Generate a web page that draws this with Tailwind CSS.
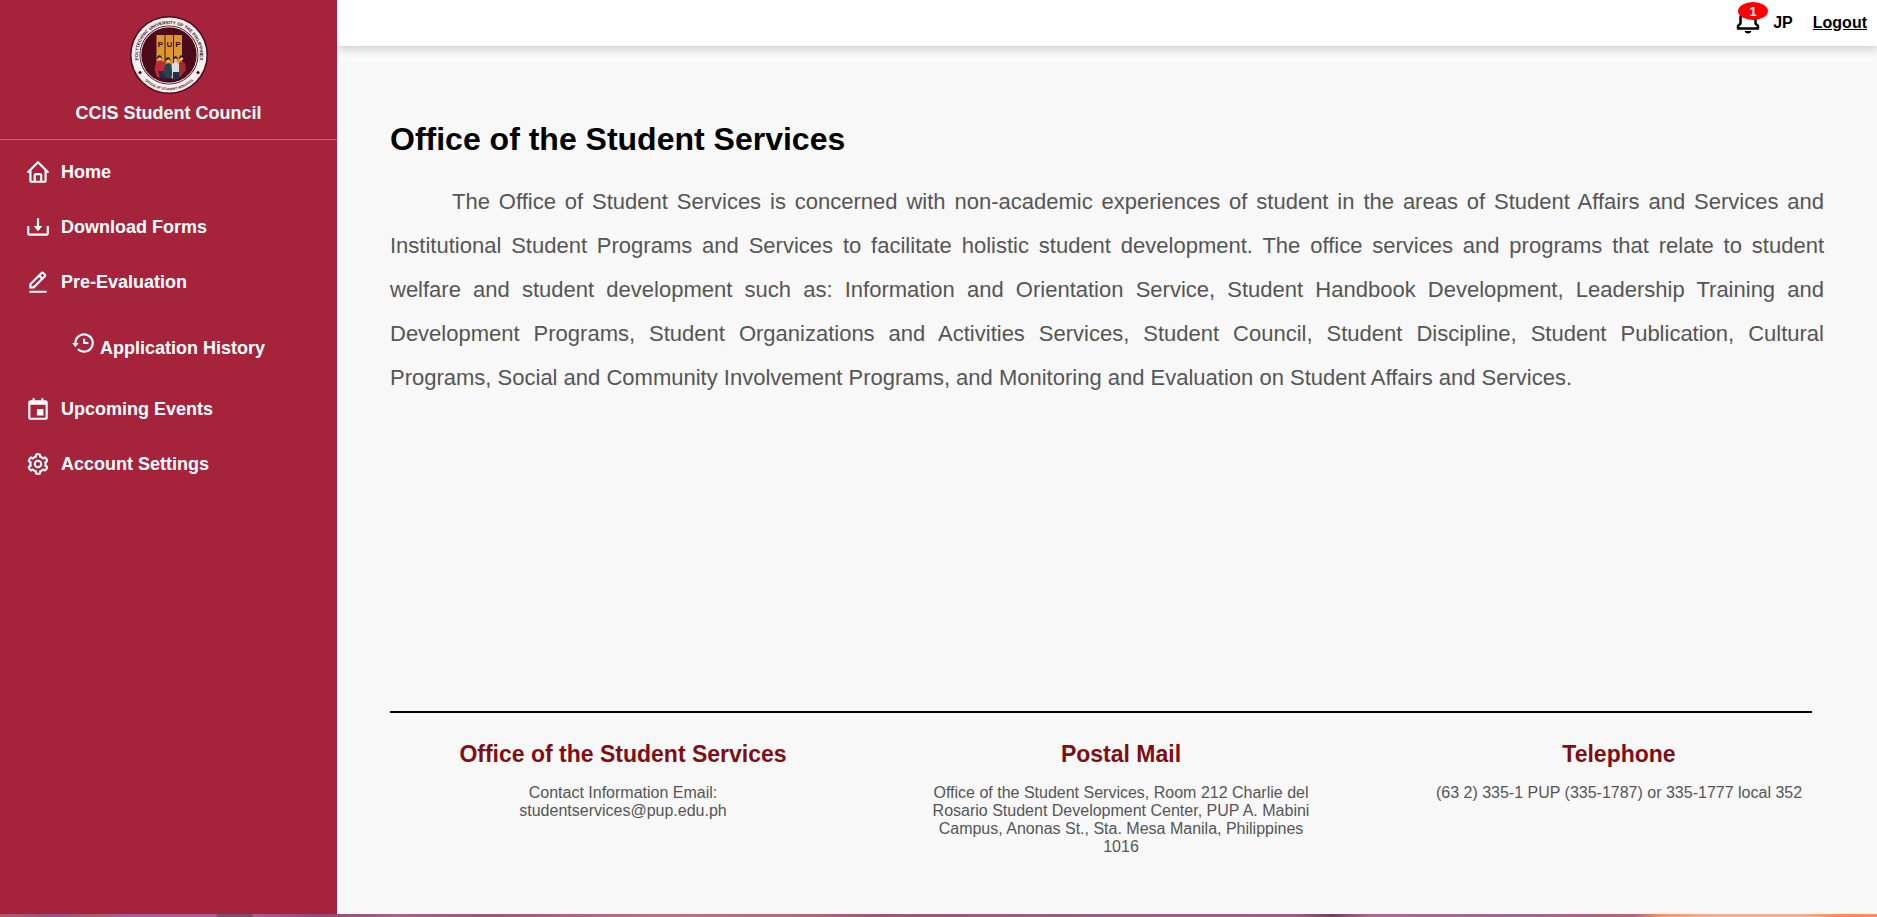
<!DOCTYPE html>
<html lang="en">
<head>
<meta charset="utf-8">
<meta name="viewport" content="width=device-width, initial-scale=1">
<title>Office of the Student Services</title>
<script src="https://cdn.jsdelivr.net/npm/@tailwindcss/browser@4"></script>
</head>
<body class="flex min-h-screen flex-col bg-[#f8f8f8] font-['Liberation_Sans',Arial,sans-serif] text-black">
<div class="flex flex-1">
  <aside class="relative z-10 flex w-[337px] shrink-0 flex-col bg-[#a6243b] text-lg font-bold text-white">
    <div class="flex flex-col items-center border-b border-white/30 pt-4 pb-3">
      <svg class="size-[78px]" viewBox="0 0 78 78" role="img" aria-label="University seal">
        <circle cx="39" cy="39" r="39" fill="#4d0a1b"/>
        <circle cx="39" cy="39" r="37.5" fill="#f6f1f0"/>
        <circle cx="39" cy="39" r="29.5" fill="#4d0a1b"/>
        <circle cx="39" cy="39" r="28.2" fill="none" stroke="#f6f1f0" stroke-width="1"/>
        <g fill="#dd982c"><path d="M26.500 19h8v40l-8-5z"/><path d="M35.500 19h7.500v43h-7.500z"/><path d="M44 19h8v35l-8 5z"/></g>
        <g font-size="8" font-weight="700" fill="#3c0a12" text-anchor="middle"><text x="30.500" y="31">P</text><text x="39.300" y="31">U</text><text x="48" y="31">P</text></g>
        <path d="M24.500 54l1.500-8 4-2 4 2 1 9v6h-8z" fill="#c32835"/>
        <path d="M34 52l2-4 3-1 3 2 1 8-2 5h-6z" fill="#27434b"/>
        <path d="M41.500 49l3-3h3l2 4v11l-3 2h-4z" fill="#d8dde0"/>
        <path d="M49 47l3-2 3 2 1 7-6 7h-1z" fill="#a52a32"/>
        <path d="M28 55h6l2 9-6-3zM43 56h6v6l-6 3z" fill="#173252"/>
        <g fill="#edbd98"><circle cx="29.500" cy="42.500" r="1.900"/><circle cx="38" cy="44.500" r="1.800"/><circle cx="45.500" cy="43.500" r="1.900"/><circle cx="51.500" cy="42.500" r="1.800"/></g>
        <g fill="#1b1420"><path d="M27 43c0-5 5-5 5 0l-2-2zM35.500 45c0-5 5-5 5 0l-2-2zM43 44c0-5 5-5 5 0l-2-2zM49 43c0-5 5-5 5 0l-2-2z"/></g>
        <path id="sealTop" d="M11.600 53.500A31 31 0 1 1 66.400 53.500" fill="none"/>
        <path id="sealBottom" d="M10.500 59.500A35 35 0 0 0 67.500 59.500" fill="none"/>
        <text font-size="4.500" font-weight="700" fill="#4d0a1b" text-anchor="middle"><textPath href="#sealTop" startOffset="50%">POLYTECHNIC UNIVERSITY OF THE PHILIPPINES</textPath></text>
        <text font-size="3.400" font-weight="700" fill="#4d0a1b" text-anchor="middle"><textPath href="#sealBottom" startOffset="50%">OFFICE OF STUDENT SERVICES</textPath></text>
        <circle cx="10" cy="56.500" r="1.600" fill="#4d0a1b"/><circle cx="68" cy="56.500" r="1.600" fill="#4d0a1b"/>
      </svg>
      <p class="mt-[5px] leading-7">CCIS Student Council</p>
    </div>
    <nav class="flex flex-col pt-1">
      <a href="#" class="flex h-[55px] items-center gap-[10px] pl-[25px]">
        <svg class="size-[26px]" viewBox="0 0 24 24" fill="currentColor"><path d="M3 13h1v7c0 1.103.897 2 2 2h12c1.103 0 2-.897 2-2v-7h1a1 1 0 0 0 .707-1.707l-9-9a.999.999 0 0 0-1.414 0l-9 9A1 1 0 0 0 3 13zm7 7v-5h4v5h-4zm2-15.586 6 6V15l.001 5H16v-5c0-1.103-.897-2-2-2h-4c-1.103 0-2 .897-2 2v5H6v-9.586l6-6z"/></svg>
        Home</a>
      <a href="#" class="flex h-[55px] items-center gap-[10px] pl-[25px]">
        <svg class="size-[26px]" viewBox="0 0 24 24" fill="currentColor"><path d="m12 16 4-5h-3V4h-2v7H8z"/><path d="M20 18H4v-7H2v7c0 1.103.897 2 2 2h16c1.103 0 2-.897 2-2v-7h-2v7z"/></svg>
        Download Forms</a>
      <a href="#" class="flex h-[55px] items-center gap-[10px] pl-[25px]">
        <svg class="size-[26px]" viewBox="0 0 24 24" fill="currentColor"><path d="M19.045 7.401c.378-.378.586-.88.586-1.414s-.208-1.036-.586-1.414l-1.586-1.586c-.378-.378-.88-.586-1.414-.586s-1.036.208-1.413.585L4 13.585V18h4.413L19.045 7.401zm-3-3 1.587 1.585-1.590 1.584-1.586-1.585 1.589-1.584zM6 16v-1.585l7.040-7.018 1.586 1.586L7.587 16H6zm-2 4h16v2H4z"/></svg>
        Pre-Evaluation</a>
      <a href="#" class="flex h-[72px] items-start gap-1 pt-[21px] pl-[70px]">
        <svg class="size-[26px]" viewBox="0 0 24 24" fill="currentColor"><path d="M12 8v5h5v-2h-3V8z"/><path d="M21.292 8.497a8.957 8.957 0 0 0-1.928-2.862 9.004 9.004 0 0 0-4.550-2.452 9.090 9.090 0 0 0-3.626 0 8.965 8.965 0 0 0-4.552 2.453 9.048 9.048 0 0 0-1.928 2.860A8.963 8.963 0 0 0 4 12l.001.025H2L5 16l3-3.975H6.001L6 12a6.957 6.957 0 0 1 1.195-3.913 7.066 7.066 0 0 1 1.891-1.892 7.034 7.034 0 0 1 2.503-1.054 7.003 7.003 0 0 1 8.269 5.445 7.117 7.117 0 0 1 0 2.824 6.936 6.936 0 0 1-1.054 2.503c-.25.371-.537.72-.854 1.036a7.058 7.058 0 0 1-2.225 1.501 6.980 6.980 0 0 1-1.313.408 7.117 7.117 0 0 1-2.823 0 6.957 6.957 0 0 1-2.501-1.053 7.066 7.066 0 0 1-1.037-.855l-1.414 1.414A8.985 8.985 0 0 0 13 21a9.050 9.050 0 0 0 3.503-.707 9.009 9.009 0 0 0 3.959-3.260A8.968 8.968 0 0 0 22 12a8.928 8.928 0 0 0-.708-3.503z"/></svg>
        <span class="pt-1">Application History</span></a>
      <a href="#" class="flex h-[55px] items-center gap-[10px] pl-[25px]">
        <svg class="size-[26px]" viewBox="0 0 24 24" fill="currentColor"><path d="M19 4h-2V2h-2v2H9V2H7v2H5c-1.103 0-2 .897-2 2v14c0 1.103.897 2 2 2h14c1.103 0 2-.897 2-2V6c0-1.103-.897-2-2-2zm.002 16H5V8h14l.002 12z"/><path d="M11 12h6v6h-6z"/></svg>
        Upcoming Events</a>
      <a href="#" class="flex h-[55px] items-center gap-[10px] pl-[25px]">
        <svg class="size-[26px]" viewBox="0 0 24 24" fill="currentColor"><path d="M12 16c2.206 0 4-1.794 4-4s-1.794-4-4-4-4 1.794-4 4 1.794 4 4 4zm0-6c1.084 0 2 .916 2 2s-.916 2-2 2-2-.916-2-2 .916-2 2-2z"/><path d="m2.845 16.136 1 1.730c.531.917 1.809 1.261 2.730.73l.529-.306A8.100 8.100 0 0 0 9 19.402V20c0 1.103.897 2 2 2h2c1.103 0 2-.897 2-2v-.598a8.132 8.132 0 0 0 1.896-1.111l.529.306c.923.53 2.198.188 2.731-.731l.999-1.729a2.001 2.001 0 0 0-.731-2.732l-.505-.292a7.718 7.718 0 0 0 0-2.224l.505-.292a2.002 2.002 0 0 0 .731-2.732l-.999-1.729c-.531-.92-1.808-1.265-2.731-.732l-.529.306A8.100 8.100 0 0 0 15 4.598V4c0-1.103-.897-2-2-2h-2c-1.103 0-2 .897-2 2v.598a8.132 8.132 0 0 0-1.896 1.111l-.529-.306c-.924-.531-2.200-.187-2.731.732l-.999 1.729a2.001 2.001 0 0 0 .731 2.732l.505.292a7.683 7.683 0 0 0 0 2.223l-.505.292a2.003 2.003 0 0 0-.731 2.733zm3.326-2.758A5.703 5.703 0 0 1 6 12c0-.462.058-.926.17-1.378a.999.999 0 0 0-.47-1.108l-1.123-.65.998-1.729 1.145.662a.997.997 0 0 0 1.188-.142 6.071 6.071 0 0 1 2.384-1.399A1 1 0 0 0 11 5.300V4h2v1.300a1 1 0 0 0 .708.956 6.083 6.083 0 0 1 2.384 1.399.999.999 0 0 0 1.188.142l1.144-.661 1 1.729-1.124.649a1 1 0 0 0-.47 1.108c.112.452.17.916.17 1.378 0 .461-.058.925-.171 1.378a1 1 0 0 0 .471 1.108l1.123.649-.998 1.729-1.145-.661a.996.996 0 0 0-1.188.142 6.071 6.071 0 0 1-2.384 1.399A1 1 0 0 0 13 18.700l.002 1.300H11v-1.300a1 1 0 0 0-.708-.956 6.083 6.083 0 0 1-2.384-1.399.992.992 0 0 0-1.188-.141l-1.144.662-1-1.729 1.124-.651a1 1 0 0 0 .471-1.108z"/></svg>
        Account Settings</a>
    </nav>
  </aside>

  <div class="flex min-w-0 flex-1 flex-col">
    <header class="flex h-[46px] items-start justify-end bg-white pr-[10px] font-bold shadow-[0_2px_10px_rgba(0,0,0,0.2)]">
      <button type="button" class="relative mt-[6px] mr-[10px]" aria-label="Notifications">
        <svg class="size-[30px]" viewBox="0 0 24 24" fill="currentColor"><path d="M19 13.586V10c0-3.217-2.185-5.927-5.145-6.742C13.562 2.520 12.846 2 12 2s-1.562.52-1.855 1.258C7.185 4.074 5 6.783 5 10v3.586l-1.707 1.707A.996.996 0 0 0 3 16v2a1 1 0 0 0 1 1h16a1 1 0 0 0 1-1v-2a.996.996 0 0 0-.293-.707L19 13.586zM19 17H5v-.586l1.707-1.707A.996.996 0 0 0 7 14v-4c0-2.757 2.243-5 5-5s5 2.243 5 5v4c0 .266.105.52.293.707L19 16.414V17zm-7 5a2.980 2.980 0 0 0 2.818-2H9.182A2.980 2.980 0 0 0 12 22z"/></svg>
        <span class="absolute -top-1 left-[5px] flex h-[18px] w-[30px] items-center justify-center rounded-[50%] bg-[#ff0000] text-[13px] leading-none text-white">1</span>
      </button>
      <span class="mt-[11px] mr-5">JP</span>
      <a href="#" class="mt-[11px] underline">Logout</a>
    </header>

    <main class="pt-[73px] pr-[53px] pl-[53px]">
      <h1 class="text-[32px] leading-10 font-bold">Office of the Student Services</h1>
      <p class="mt-[21px] indent-[62px] text-[22px] leading-[44px] text-justify text-[#555555]">The Office of Student Services is concerned with non-academic experiences of student in the areas of Student Affairs and Services and Institutional Student Programs and Services to facilitate holistic student development. The office services and programs that relate to student welfare and student development such as: Information and Orientation Service, Student Handbook Development, Leadership Training and Development Programs, Student Organizations and Activities Services, Student Council, Student Discipline, Student Publication, Cultural Programs, Social and Community Involvement Programs, and Monitoring and Evaluation on Student Affairs and Services.</p>
    </main>

    <footer class="mt-auto pb-[58px]">
      <hr class="mr-[65px] ml-[53px] border-t-2 border-black">
      <div class="mt-[27px] mr-[9px] ml-[37px] grid grid-cols-3 text-center leading-[18px] text-[#555555]">
        <section class="flex flex-col items-center">
          <h2 class="text-[23px] leading-7 font-bold text-[#800d12]">Office of the Student Services</h2>
          <p class="mt-4 max-w-96">Contact Information Email:<br>studentservices@pup.edu.ph</p>
        </section>
        <section class="flex flex-col items-center">
          <h2 class="text-[23px] leading-7 font-bold text-[#800d12]">Postal Mail</h2>
          <p class="mt-4 max-w-96">Office of the Student Services, Room 212 Charlie del Rosario Student Development Center, PUP A. Mabini Campus, Anonas St., Sta. Mesa Manila, Philippines 1016</p>
        </section>
        <section class="flex flex-col items-center">
          <h2 class="text-[23px] leading-7 font-bold text-[#800d12]">Telephone</h2>
          <p class="mt-4 max-w-96">(63 2) 335-1 PUP (335-1787) or 335-1777 local 352</p>
        </section>
      </div>
    </footer>
  </div>
</div>
<div class="h-[3px] bg-[linear-gradient(90deg,#b5586b_0%,#8f5583_3%,#a65f74_5%,#a4609a_7%,#a8618f_11.5%,#73516a_11.6%,#73516a_13.4%,#a8618f_13.5%,#8d4a72_17%,#a5648a_21%,#9a5975_26%,#bb7188_35%,#b56a7d_42%,#9b5872_47%,#98607f_55%,#9b6083_69%,#733f5c_71%,#aa6b92_73%,#9b6690_81%,#b96276_87%,#ff8f66_88.500%,#f8ac91_91%,#f8ac91_96%,#ff8a50_98%,#ff8f5c_100%)]"></div>
</body>
</html>
